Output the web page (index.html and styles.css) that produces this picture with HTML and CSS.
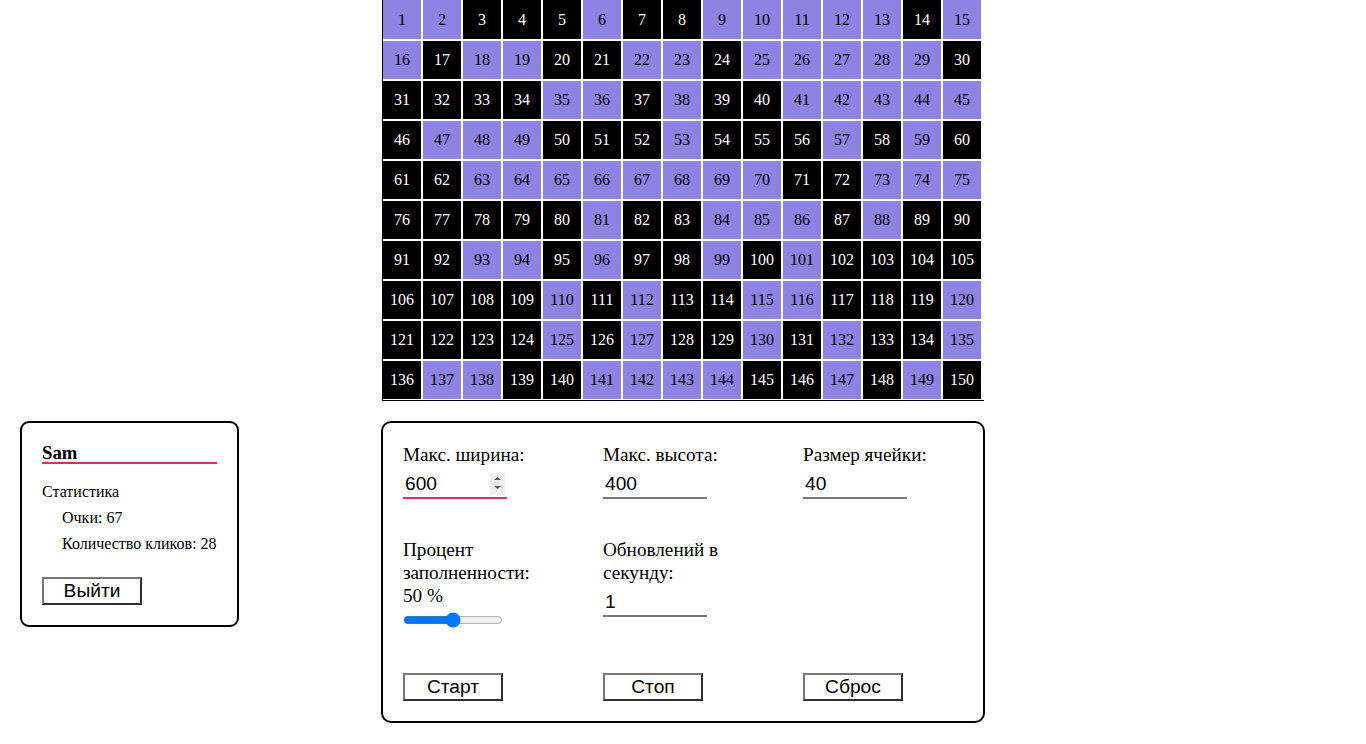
FILE: index.html
```html
<!DOCTYPE html>
<html lang="ru">
<head>
<meta charset="utf-8">
<title>Игра</title>
<link rel="stylesheet" href="styles.css">
</head>
<body>
<div class="board">
<div class="cell on">1</div><div class="cell on">2</div><div class="cell">3</div><div class="cell">4</div><div class="cell">5</div><div class="cell on">6</div><div class="cell">7</div><div class="cell">8</div><div class="cell on">9</div><div class="cell on">10</div><div class="cell on">11</div><div class="cell on">12</div><div class="cell on">13</div><div class="cell">14</div><div class="cell on">15</div>
<div class="cell on">16</div><div class="cell">17</div><div class="cell on">18</div><div class="cell on">19</div><div class="cell">20</div><div class="cell">21</div><div class="cell on">22</div><div class="cell on">23</div><div class="cell">24</div><div class="cell on">25</div><div class="cell on">26</div><div class="cell on">27</div><div class="cell on">28</div><div class="cell on">29</div><div class="cell">30</div>
<div class="cell">31</div><div class="cell">32</div><div class="cell">33</div><div class="cell">34</div><div class="cell on">35</div><div class="cell on">36</div><div class="cell">37</div><div class="cell on">38</div><div class="cell">39</div><div class="cell">40</div><div class="cell on">41</div><div class="cell on">42</div><div class="cell on">43</div><div class="cell on">44</div><div class="cell on">45</div>
<div class="cell">46</div><div class="cell on">47</div><div class="cell on">48</div><div class="cell on">49</div><div class="cell">50</div><div class="cell">51</div><div class="cell">52</div><div class="cell on">53</div><div class="cell">54</div><div class="cell">55</div><div class="cell">56</div><div class="cell on">57</div><div class="cell">58</div><div class="cell on">59</div><div class="cell">60</div>
<div class="cell">61</div><div class="cell">62</div><div class="cell on">63</div><div class="cell on">64</div><div class="cell on">65</div><div class="cell on">66</div><div class="cell on">67</div><div class="cell on">68</div><div class="cell on">69</div><div class="cell on">70</div><div class="cell">71</div><div class="cell">72</div><div class="cell on">73</div><div class="cell on">74</div><div class="cell on">75</div>
<div class="cell">76</div><div class="cell">77</div><div class="cell">78</div><div class="cell">79</div><div class="cell">80</div><div class="cell on">81</div><div class="cell">82</div><div class="cell">83</div><div class="cell on">84</div><div class="cell on">85</div><div class="cell on">86</div><div class="cell">87</div><div class="cell on">88</div><div class="cell">89</div><div class="cell">90</div>
<div class="cell">91</div><div class="cell">92</div><div class="cell on">93</div><div class="cell on">94</div><div class="cell">95</div><div class="cell on">96</div><div class="cell">97</div><div class="cell">98</div><div class="cell on">99</div><div class="cell">100</div><div class="cell on">101</div><div class="cell">102</div><div class="cell">103</div><div class="cell">104</div><div class="cell">105</div>
<div class="cell">106</div><div class="cell">107</div><div class="cell">108</div><div class="cell">109</div><div class="cell on">110</div><div class="cell">111</div><div class="cell on">112</div><div class="cell">113</div><div class="cell">114</div><div class="cell on">115</div><div class="cell on">116</div><div class="cell">117</div><div class="cell">118</div><div class="cell">119</div><div class="cell on">120</div>
<div class="cell">121</div><div class="cell">122</div><div class="cell">123</div><div class="cell">124</div><div class="cell on">125</div><div class="cell">126</div><div class="cell on">127</div><div class="cell">128</div><div class="cell">129</div><div class="cell on">130</div><div class="cell">131</div><div class="cell on">132</div><div class="cell">133</div><div class="cell">134</div><div class="cell on">135</div>
<div class="cell">136</div><div class="cell on">137</div><div class="cell on">138</div><div class="cell">139</div><div class="cell">140</div><div class="cell on">141</div><div class="cell on">142</div><div class="cell on">143</div><div class="cell on">144</div><div class="cell">145</div><div class="cell">146</div><div class="cell on">147</div><div class="cell">148</div><div class="cell on">149</div><div class="cell">150</div>
</div>

<div class="bottom">
  <div class="user">
    <h3 class="user-name">Sam</h3>
    <div class="stats-title">Статистика</div>
    <div class="stat">Очки: 67</div>
    <div class="stat">Количество кликов: 28</div>
    <button class="btn logout" type="button">Выйти</button>
  </div>

  <div class="controls">
    <div class="field">
      <div class="field-label">Макс. ширина:</div>
      <div class="input-wrap focused">
        <input class="num" type="text" value="600">
        <span class="spin"><svg width="15" height="22" viewBox="0 0 15 22"><polygon points="4,7 11,7 7.5,4" fill="#5a5a5a"/><polygon points="4,13 11,13 7.5,16" fill="#5a5a5a"/></svg></span>
      </div>
    </div>
    <div class="field">
      <div class="field-label">Макс. высота:</div>
      <div class="input-wrap"><input class="num" type="text" value="400"></div>
    </div>
    <div class="field">
      <div class="field-label">Размер ячейки:</div>
      <div class="input-wrap"><input class="num" type="text" value="40"></div>
    </div>

    <div class="field">
      <div class="field-label">Процент заполненности:</div>
      <div class="field-label">50 %</div>
      <input class="range" type="range" min="0" max="100" value="50">
    </div>
    <div class="field">
      <div class="field-label">Обновлений в секунду:</div>
      <div class="input-wrap"><input class="num" type="text" value="1"></div>
    </div>
    <div class="field"></div>

    <button class="btn ctl" type="button">Старт</button>
    <button class="btn ctl" type="button">Стоп</button>
    <button class="btn ctl" type="button">Сброс</button>
  </div>
  <div></div>
</div>
</body>
</html>
```

FILE: styles.css
```css
body {
  margin: 0;
  background: #fff;
  color: #000;
  font-family: "Liberation Serif", "Times New Roman", serif;
}

.board {
  width: 602px;
  box-sizing: border-box;
  margin: 0 auto;
  display: grid;
  grid-template-columns: repeat(15, 38px);
  grid-template-rows: 39px repeat(9, 38px);
  gap: 2px;
  padding: 0 3px 1px 0;
  border-left: 1px solid #000;
  border-bottom: 1px solid #000;
}

.cell {
  background: #000;
  color: #fff;
  display: flex;
  align-items: center;
  justify-content: center;
  font-size: 16px;
}

.cell.on {
  background: #8e82e2;
  color: #000;
}

.bottom {
  display: grid;
  grid-template-columns: 1fr 604px 1fr;
  margin-top: 20px;
  align-items: start;
}

.user {
  justify-self: start;
  margin-left: 20px;
  width: 219px;
  box-sizing: border-box;
  border: 2px solid #000;
  border-radius: 9px;
  padding: 20px;
}

.user-name {
  margin: 0;
  font-size: 18.72px;
  font-weight: bold;
  line-height: 19px;
  border-bottom: 2px solid #f2235b;
}

.stats-title {
  margin-top: 19px;
  font-size: 16px;
  line-height: 18px;
}

.stat {
  margin-top: 8px;
  padding-left: 20px;
  font-size: 16px;
  line-height: 18px;
}

.btn {
  display: block;
  width: 100px;
  height: 28px;
  box-sizing: border-box;
  padding: 0;
  background: #fff;
  color: #000;
  font-family: "Liberation Sans", Arial, sans-serif;
  font-size: 19.2px;
  border: 2px solid;
  border-color: #767676 #2e2e2e #2e2e2e #767676;
}

.logout {
  margin-top: 24px;
}

.controls {
  border: 2px solid #000;
  border-radius: 10px;
  padding: 20px 0 20px 20px;
  display: grid;
  grid-template-columns: repeat(3, 180px);
  column-gap: 20px;
  row-gap: 39px;
  align-items: start;
}

.field-label {
  font-size: 19.2px;
  line-height: 23px;
}

.input-wrap {
  margin-top: 5px;
  width: 104px;
  height: 28px;
  box-sizing: border-box;
  border-bottom: 2px solid #767676;
  display: flex;
  align-items: center;
}

.input-wrap.focused {
  border-bottom-color: #f2235b;
}

.num {
  flex: 1;
  min-width: 0;
  border: none;
  outline: none;
  background: transparent;
  padding: 0 2px;
  margin: 0;
  font-family: "Liberation Sans", Arial, sans-serif;
  font-size: 19.2px;
  color: #000;
}

.spin {
  flex-shrink: 0;
  width: 15px;
  height: 22px;
  margin-right: 2px;
  background: #efefef;
  display: flex;
}

.range {
  display: block;
  width: 100px;
  height: 16px;
  margin: 5px 0 0 0;
}

.ctl {
  margin-top: 6px;
}
```
